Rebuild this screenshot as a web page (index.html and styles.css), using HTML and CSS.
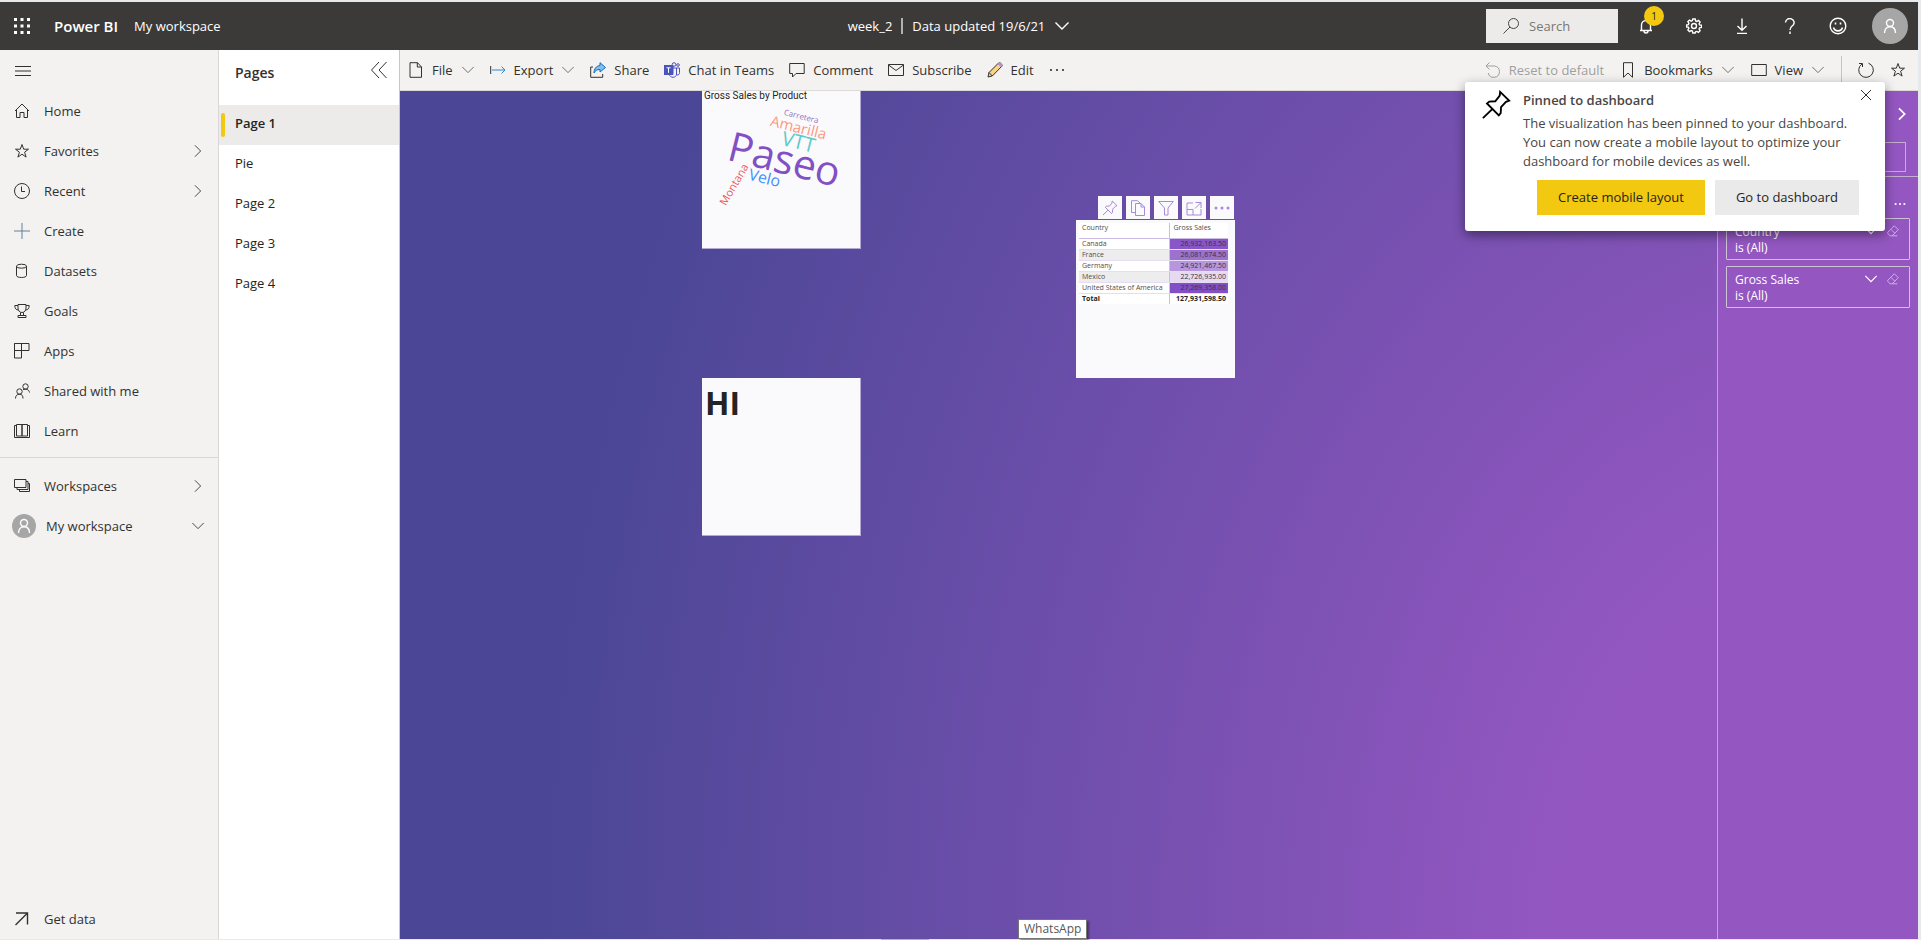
FILE: index.html
```html
<!DOCTYPE html>
<html lang="en">
<head>
<meta charset="utf-8">
<title>week_2 - Power BI</title>
<link rel="stylesheet" href="styles.css">
</head>
<body>
<svg class="defs" aria-hidden="true">
  <symbol id="chev-down" viewBox="0 0 16 16"><path d="M1.500 4.500l6.500 6.500 6.500-6.500"/></symbol>
  <symbol id="chev-right" viewBox="0 0 16 16"><path d="M4.500 1.500L11 8l-6.500 6.500"/></symbol>
  <symbol id="star" viewBox="0 0 16 16"><path d="M8 1.500l1.700 4.700h4.800l-3.900 3 1.500 4.900L8 11.200l-4.100 2.900 1.500-4.900-3.900-3h4.800z"/></symbol>
  <symbol id="person" viewBox="0 0 16 16"><circle cx="8" cy="5" r="3.500"/><path d="M2.500 15c0-4 2.300-6.300 5.500-6.300s5.500 2.300 5.500 6.300"/></symbol>
  <symbol id="pin" viewBox="0 0 16 16"><path d="M10.200 1l4.800 4.700-1.700.6-2.600 2.800-.2 3.200-1 1.200-6.300-6.300 1.200-1 3.200-.2L10 3zM6 10.200L1 15"/></symbol>
  <symbol id="eraser" viewBox="0 0 16 16"><path d="M9.500 2l4.500 4.500-7 7H4.500L2 10.500v-1zM5.500 6l4.500 4.500M7 13.500h6"/></symbol>
</svg>
<div class="app">
  <header class="topbar">
    <div class="brand">
      <button class="icon-btn" aria-label="App launcher"><svg class="i16 solid" viewBox="0 0 16 16"><path d="M0 0h3v3H0zM6.500 0h3v3h-3zM13 0h3v3h-3zM0 6.500h3v3H0zM6.500 6.500h3v3h-3zM13 6.500h3v3h-3zM0 13h3v3H0zM6.500 13h3v3h-3zM13 13h3v3h-3z"/></svg></button>
      <a class="brand-name" href="#">Power BI</a>
      <a class="crumb" href="#">My workspace</a>
    </div>
    <button class="report-title"><span>week_2</span><span class="bar"></span><span>Data updated 19/6/21</span><svg class="i16 bold"><use href="#chev-down"/></svg></button>
    <div class="top-actions">
      <label class="search"><svg class="i16" viewBox="0 0 16 16"><circle cx="10.500" cy="5.500" r="5"/><path d="M7 9L.5 15.500"/></svg><input type="text" placeholder="Search" aria-label="Search"></label>
      <button class="top-btn" aria-label="Notifications"><svg class="i16 bold" viewBox="0 0 16 16"><path d="M2 12.500h12M3.500 12.500V7a4.500 4.500 0 0 1 9 0v5.500M6 13a2 2 0 0 0 4 0"/></svg><span class="badge">1</span></button>
      <button class="top-btn" aria-label="Settings"><svg class="i16 bold" viewBox="0 0 16 16"><circle cx="8" cy="8" r="2.500"/><path d="M6.800 1h2.400l.4 1.900 1.200.5 1.700-1 1.600 1.600-1 1.700.5 1.200 1.900.3v2.300l-1.900.4-.5 1.200 1 1.600-1.600 1.700-1.700-1-1.200.4L9.200 15H6.800l-.4-2-1.200-.4-1.700 1-1.600-1.700 1-1.600-.5-1.200L.7 9V6.900l1.700-.3.500-1.200-1-1.700 1.600-1.600 1.700 1 1.100-.5z"/></svg></button>
      <button class="top-btn" aria-label="Download"><svg class="i16 bold" viewBox="0 0 16 16"><path d="M8 .5v11.500M3.500 8L8 12.200 12.500 8M3 15.500h10"/></svg></button>
      <button class="top-btn" aria-label="Help"><svg class="i16 bold" viewBox="0 0 16 16"><path d="M3.500 4.500a4.300 4 0 1 1 7.500 2.700C9.500 8.500 8 9.200 8 12M8 13.500V16"/></svg></button>
      <button class="top-btn" aria-label="Feedback"><svg class="i18 bold" viewBox="0 0 18 18"><circle cx="9" cy="9" r="7.800"/><path d="M4.500 10.500a4.700 4.700 0 0 0 9 0M6.500 5.500v2M11.500 5.500v2" stroke-width="1.600"/></svg></button>
      <button class="avatar avatar-lg" aria-label="Account"><svg class="i16 bold"><use href="#person"/></svg></button>
    </div>
  </header>

  <div class="body">
    <nav class="nav" aria-label="Main">
      <button class="menu" aria-label="Collapse navigation"><svg class="i16" viewBox="0 0 16 16"><path d="M0 3.500h16M0 8h16M0 12.500h16"/></svg></button>
      <a class="nav-item" href="#"><svg class="i16" viewBox="0 0 16 16"><path d="M1 8l7-7 7 7M2.500 6.500v8h3.500V9.500h4v5h3.500v-8"/></svg><span>Home</span></a>
      <a class="nav-item" href="#"><svg class="i16"><use href="#star"/></svg><span>Favorites</span><svg class="i14"><use href="#chev-right"/></svg></a>
      <a class="nav-item" href="#"><svg class="i16" viewBox="0 0 16 16"><circle cx="8" cy="8" r="7.500"/><path d="M7.500 3.500v5H11"/></svg><span>Recent</span><svg class="i14"><use href="#chev-right"/></svg></a>
      <a class="nav-item" href="#"><svg class="i16 plus" viewBox="0 0 16 16"><path d="M8 0v16M0 8h16"/></svg><span>Create</span></a>
      <a class="nav-item" href="#"><svg class="i16" viewBox="0 0 16 16"><ellipse cx="7.500" cy="3.200" rx="5" ry="2"/><path d="M2.500 3.200v9.300c0 1.200 2.200 2 5 2s5-.8 5-2V3.200"/></svg><span>Datasets</span></a>
      <a class="nav-item" href="#"><svg class="i16" viewBox="0 0 16 16"><path d="M4 1.500h8V5c0 2.500-1.500 4.500-4 4.500S4 7.500 4 5zM4 2.500H.8C.8 5.500 2 7 4.500 7M12 2.500h3.200c0 3-1.200 4.500-3.700 4.500M6.500 9.500v3M9.500 9.500v3M4 14.500v-2h8v2z"/></svg><span>Goals</span></a>
      <a class="nav-item" href="#"><svg class="i16" viewBox="0 0 16 16"><path d="M.5.500h14.500v7H.5zM.5.500v14.500h7V.5"/></svg><span>Apps</span></a>
      <a class="nav-item" href="#"><svg class="i16" viewBox="0 0 16 16"><circle cx="5.500" cy="8.500" r="2.700"/><circle cx="11.500" cy="3.500" r="2.700"/><path d="M1.500 15.500c0-2.700 1.500-4.300 4-4.300s3.500 1.600 3.500 4.300M9 6.800c2.500-1.500 6-.5 6.500 2.700"/></svg><span>Shared with me</span></a>
      <a class="nav-item" href="#"><svg class="i16" viewBox="0 0 16 16"><path d="M2.500 1.500H8v11.500H2.500zM8 1.500h5.500v11.500H8zM2.500 2.500H.5v12h15v-12h-2"/></svg><span>Learn</span></a>
      <div class="rule"></div>
      <a class="nav-item" href="#"><svg class="i16" viewBox="0 0 16 16"><path d="M.5 1.500h11.500v8H.5zM12 3.500h2v8H3v-2M14 5.500h1.500v8H5.500v-2"/></svg><span>Workspaces</span><svg class="i14"><use href="#chev-right"/></svg></a>
      <a class="nav-item own" href="#"><i class="avatar avatar-sm"><svg class="i16 bold"><use href="#person"/></svg></i><span>My workspace</span><svg class="i14"><use href="#chev-down"/></svg></a>
      <a class="nav-item last" href="#"><svg class="i16 bold" viewBox="0 0 16 16"><path d="M2 2h11.500v11.500M13.500 2L1.500 14"/></svg><span>Get data</span></a>
    </nav>

    <aside class="pages" aria-label="Pages">
      <div class="pages-head"><h2>Pages</h2><button class="icon-btn" aria-label="Collapse pages"><svg class="i16" viewBox="0 0 16 16"><path d="M8 0L.5 8 8 16M15.500 0L8 8l7.500 8"/></svg></button></div>
      <a class="page current" href="#">Page 1</a>
      <a class="page" href="#">Pie</a>
      <a class="page" href="#">Page 2</a>
      <a class="page" href="#">Page 3</a>
      <a class="page" href="#">Page 4</a>
    </aside>

    <main class="report">
      <div class="toolbar">
        <div class="tools">
          <button class="tool"><svg class="i16" viewBox="0 0 16 16"><path d="M2 .7h7.500L13.500 5v10.300H2zM9.300.7V5h4.200"/></svg>File<svg class="i14 chev"><use href="#chev-down"/></svg></button>
          <button class="tool"><svg class="i16" viewBox="0 0 16 16"><path d="M.7 4v8"/><path class="blue" d="M2 8h13M11.500 4.500L15 8l-3.500 3.500"/></svg>Export<svg class="i14 chev"><use href="#chev-down"/></svg></button>
          <button class="tool"><svg class="i16" viewBox="0 0 16 16"><path d="M3 5H.7v10.300h12V12"/><path class="share" d="M10 .7L15.500 5.500 10 10V7.500c-3 0-4.800 1-6 3.500 0-4 2-7 6-7.500z"/></svg>Share</button>
          <button class="tool"><svg class="i16 teams" viewBox="0 0 16 16"><circle cx="10" cy="2.500" r="1.800"/><circle cx="14" cy="3" r="1.300"/><path d="M9 6h6.500v4.500c0 2-1 2.500-2.500 2.500M12.500 6v6c0 2-1.500 3.300-3.500 3.300S6 14 5.500 13"/><path class="fill" d="M0 3.500h9v9H0z"/><path class="mark" d="M2.500 5.800h4M4.500 5.800v5"/></svg>Chat in Teams</button>
          <button class="tool"><svg class="i16" viewBox="0 0 16 16"><path d="M.7 1.500h14.500v10H7l-3.500 3.500v-3.500H.7z"/></svg>Comment</button>
          <button class="tool"><svg class="i16" viewBox="0 0 16 16"><path d="M.5 2.500h15v11H.5zM.5 3l7.500 5.500L15.500 3"/></svg>Subscribe</button>
          <button class="tool"><svg class="i16" viewBox="0 0 16 16"><path class="pencil" d="M1 15l1-4.500L11.500 1c1.800-1 4.300 1.500 3.300 3.300L5.300 14z"/><path class="tip" d="M10.500 2l1.500-1.300c1.500-.5 3.500 1.500 3 3L13.800 5.300z"/><path d="M2 10.500L5.300 14"/></svg>Edit</button>
          <button class="tool" aria-label="More options"><svg class="i16 solid" viewBox="0 0 16 16"><circle cx="2" cy="8" r="1.100"/><circle cx="8" cy="8" r="1.100"/><circle cx="14" cy="8" r="1.100"/></svg></button>
        </div>
        <div class="tools tools-end">
          <button class="tool" disabled><svg class="i16" viewBox="0 0 16 16"><path d="M1 4h8.500a5.700 5.700 0 1 1-6.300 7M4.500.5L1 4l3.500 3.500"/></svg>Reset to default</button>
          <button class="tool"><svg class="i16" viewBox="0 0 16 16"><path d="M3.500.7h9v14.600L8 11l-4.500 4.300z"/></svg>Bookmarks<svg class="i14 chev"><use href="#chev-down"/></svg></button>
          <button class="tool"><svg class="i16" viewBox="0 0 16 16"><path d="M.7 2.500h14.600v11H.7z"/></svg>View<svg class="i14 chev"><use href="#chev-down"/></svg></button>
          <span class="split"></span>
          <button class="tool" aria-label="Refresh"><svg class="i16" viewBox="0 0 16 16"><path d="M10.500 1.200A7.300 7.300 0 1 1 4 2M1 1.500h3.500V5"/></svg></button>
          <button class="tool" aria-label="Favorite"><svg class="i16"><use href="#star"/></svg></button>
        </div>
      </div>

      <div class="stage">
        <div class="canvas">
          <section class="visual cloud">
            <h3>Gross Sales by Product</h3>
            <svg viewBox="0 0 159 158" role="img" aria-label="Word cloud">
              <text transform="translate(24 69) rotate(14)" font-size="41" fill="#8250c4">Paseo</text>
              <text transform="translate(82 24) rotate(14)" font-size="8" fill="#9071ba">Carretera</text>
              <text transform="translate(68 35) rotate(14)" font-size="15" fill="#ff977e">Amarilla</text>
              <text transform="translate(79 54) rotate(14)" font-size="20" fill="#5ecbc8">VTT</text>
              <text transform="translate(46 89) rotate(14)" font-size="16" fill="#438fff">Velo</text>
              <text transform="translate(24 116) rotate(-60)" font-size="11" fill="#eb5757">Montana</text>
            </svg>
          </section>
          <section class="visual note"><p>HI</p></section>
          <div class="visual-tools">
            <button aria-label="Pin visual"><svg class="i16"><use href="#pin"/></svg></button>
            <button aria-label="Copy visual"><svg class="i16" viewBox="0 0 16 16"><path d="M5 12.500H1.500V.7h6L10 3M5.500 3.500h5.500l3.500 3.500v8.500h-9zM11 3.500V7h3.500"/></svg></button>
            <button aria-label="Filters"><svg class="i16" viewBox="0 0 16 16"><path d="M.7 1.500h14.600L10 8v7H6.500V8z"/></svg></button>
            <button aria-label="Focus mode"><svg class="i16" viewBox="0 0 16 16"><path d="M7 3H1v12h14V9M1 9.500h6V15M9.500 2.500H15V8M15 2.500L9 8.500"/></svg></button>
            <button aria-label="More options"><svg class="i16 solid" viewBox="0 0 16 16"><circle cx="2" cy="8" r="1.500"/><circle cx="8" cy="8" r="1.500"/><circle cx="14" cy="8" r="1.500"/></svg></button>
          </div>
          <section class="visual sales">
            <table>
              <thead><tr><th scope="col">Country</th><th scope="col">Gross Sales</th></tr></thead>
              <tbody>
                <tr><td>Canada</td><td class="s4">26,932,163.50</td></tr>
                <tr><td>France</td><td class="s3">26,081,674.50</td></tr>
                <tr><td>Germany</td><td class="s2">24,921,467.50</td></tr>
                <tr><td>Mexico</td><td class="s1">22,726,935.00</td></tr>
                <tr><td>United States of America</td><td class="s5">27,269,358.00</td></tr>
              </tbody>
              <tfoot><tr><td>Total</td><td>127,931,598.50</td></tr></tfoot>
            </table>
          </section>
        </div>
        <aside class="filters" aria-label="Filters">
          <div class="filters-head"><button class="icon-btn" aria-label="Collapse filters"><svg class="i14 thick"><use href="#chev-right"/></svg></button></div>
          <input class="filter-search" type="text" aria-label="Search filters">
          <div class="filters-more"><button class="icon-btn" aria-label="More options"><svg class="i14 solid" viewBox="0 0 16 16"><circle cx="3" cy="8" r="1.200"/><circle cx="8" cy="8" r="1.200"/><circle cx="13" cy="8" r="1.200"/></svg></button></div>
          <div class="filter"><div><b>Country</b><span>is (All)</span></div><svg class="i14 bold"><use href="#chev-down"/></svg><svg class="i14 dim"><use href="#eraser"/></svg></div>
          <div class="filter"><div><b>Gross Sales</b><span>is (All)</span></div><svg class="i14 bold"><use href="#chev-down"/></svg><svg class="i14 dim"><use href="#eraser"/></svg></div>
        </aside>
      </div>
    </main>
  </div>

  <div class="toast" role="status">
    <svg class="toast-pin"><use href="#pin"/></svg>
    <div class="toast-text">
      <h4>Pinned to dashboard</h4>
      <p>The visualization has been pinned to your dashboard. You can now create a mobile layout to optimize your dashboard for mobile devices as well.</p>
      <div class="toast-actions"><button class="primary">Create mobile layout</button><button>Go to dashboard</button></div>
    </div>
    <button class="toast-close" aria-label="Close"><svg class="i12" viewBox="0 0 12 12"><path d="M1 1l10 10M11 1L1 11"/></svg></button>
  </div>
  <div class="tooltip" role="tooltip">WhatsApp</div>
  <div class="taskbar-mark"></div>
</div>
</body>
</html>
```
FILE: styles.css
```css
* { box-sizing: border-box; }
body {
  margin: 0;
  font-family: "Open Sans", "Noto Sans", sans-serif;
  font-size: 13px;
  line-height: 20px;
  color: #323130;
}
h2, h3, h4, p { margin: 0; }
a { color: inherit; text-decoration: none; }
button, input { font: inherit; color: inherit; }
button { padding: 0; border: 0; background: none; }
svg { fill: none; stroke: currentColor; flex: none; }
.defs { position: absolute; width: 0; height: 0; }
.solid { fill: currentColor; stroke: none; }
.i12 { width: 12px; height: 12px; }
.i14 { width: 14px; height: 14px; }
.i16 { width: 16px; height: 16px; }
.i18 { width: 18px; height: 18px; }
.bold { stroke-width: 1.4; }
.thick { stroke-width: 2; }
.blue { stroke: #2b88d8; }
.plus { stroke: #5f8296; }
.icon-btn { display: flex; }

.app {
  position: relative;
  display: flex;
  flex-direction: column;
  height: 100vh;
  padding: 2px 3px 1px 0;
  background: #e6eaec;
  overflow: hidden;
}

/* Top bar */
.topbar {
  display: grid;
  grid-template-columns: 1fr auto 1fr;
  align-items: center;
  height: 48px;
  background: #3b3a39;
  color: #fff;
}
.brand { display: flex; align-items: center; padding-left: 14px; }
.brand-name { margin-left: 24px; font-size: 15px; font-weight: 600; }
.crumb { margin-left: 16px; }
.report-title { display: flex; align-items: center; gap: 9px; }
.bar { width: 2px; height: 16px; background: #b3b0ad; }
.top-actions { display: flex; align-items: center; justify-content: flex-end; padding-right: 10px; }
.search {
  display: flex;
  align-items: center;
  gap: 10px;
  width: 132px;
  height: 34px;
  margin-right: 4px;
  padding-left: 17px;
  background: #edebe9;
  color: #484644;
}
.search input { width: 80px; padding: 0; border: 0; background: none; }
.search input::placeholder { color: #797775; opacity: 1; }
.top-btn { position: relative; display: grid; place-items: center; width: 48px; height: 48px; }
.badge {
  position: absolute;
  top: 4px;
  left: 22px;
  width: 20px;
  height: 20px;
  border-radius: 50%;
  background: #f2c811;
  color: #252423;
  font-size: 10px;
}
.avatar { display: grid; place-items: center; border-radius: 50%; background: #a6a6a6; color: #fff; }
.avatar-lg { width: 36px; height: 36px; margin-left: 10px; }
.avatar-sm { width: 24px; height: 24px; }

/* Navigation */
.body { display: flex; flex: 1; min-height: 0; }
.nav {
  display: flex;
  flex-direction: column;
  width: 219px;
  background: #f3f2f1;
  border-right: 1px solid #d9d8d6;
}
.menu { display: flex; align-items: center; height: 41px; padding-left: 15px; }
.nav-item { display: flex; align-items: center; gap: 14px; height: 40px; padding: 0 13px 0 14px; }
.nav-item span { flex: 1; }
.own { gap: 10px; padding-left: 12px; }
.rule { margin: 6px 0 8px; border-top: 1px solid #d9d8d6; }
.last { margin-top: auto; }

/* Pages pane */
.pages { width: 181px; background: #fff; border-right: 1px solid #c8c6c4; }
.pages-head { display: flex; justify-content: space-between; height: 55px; padding: 12px 12px 0 16px; }
.pages-head h2 { font-size: 14px; font-weight: 600; line-height: 22px; }
.page { display: flex; align-items: center; height: 40px; padding: 0 0 4px 16px; color: #252423; }
.current { gap: 10px; padding-left: 2px; background: #edebe9; font-weight: 600; }
.current::before { width: 4px; height: 24px; margin-top: 4px; border-radius: 2px; background: #f2c811; content: ""; }

/* Report toolbar */
.report { display: flex; flex: 1; flex-direction: column; min-width: 0; }
.toolbar {
  display: flex;
  align-items: center;
  justify-content: space-between;
  height: 41px;
  padding: 0 12px 0 8px;
  background: #f3f2f1;
  border-bottom: 1px solid #dcdad8;
  white-space: nowrap;
}
.tools { display: flex; align-items: center; gap: 15px; }
.tools-end { gap: 16px; }
.tool { display: flex; align-items: center; gap: 8px; }
.tool:disabled { color: #a19f9d; }
.chev { color: #605e5c; }
.split { width: 1px; height: 28px; background: #c8c6c4; }
.share { fill: #83beec; stroke: #106ebe; }
.teams { stroke: #4b53bc; }
.fill { fill: #4b53bc; }
.mark { stroke: #fff; }
.pencil { fill: #f5d58a; }
.tip { fill: #c08fd0; stroke: none; }

/* Report canvas */
.stage { display: flex; flex: 1; min-height: 0; background: #9457c2; }
.canvas {
  position: relative;
  flex: 1;
  background: radial-gradient(ellipse 99% 206% at 110% 100%, #9457c2 22%, #4b4796 100%);
}
.visual {
  position: absolute;
  width: 159px;
  height: 158px;
  background: #fafafd;
  border: solid #b3a9d4;
  border-width: 0 1px 1px 0;
}
.cloud { top: 0; left: 302px; }
.cloud h3 {
  position: absolute;
  padding-left: 2px;
  font: 10px/10px Roboto, sans-serif;
  color: #252423;
}
.cloud svg { display: block; width: 100%; stroke: none; }
.note { top: 287px; left: 302px; padding: 4px 3px; }
.note p { font-size: 32px; font-weight: 700; line-height: 42px; color: #252423; }
.sales { top: 129px; left: 676px; padding: 3px; border-color: #fafafd; }
.visual-tools { position: absolute; top: 105px; left: 698px; display: flex; gap: 4px; }
.visual-tools button {
  display: grid;
  place-items: center;
  width: 24px;
  height: 23px;
  background: #fafafd;
  color: #a98ad8;
}
table { width: 149px; border-collapse: collapse; font-size: 7px; line-height: 10px; color: #504e4c; }
th, td { height: 11px; padding: 0 3px; white-space: nowrap; }
th { height: 15px; background: #fff; border-bottom: 1px solid #cdbbe8; font-weight: 400; text-align: left; vertical-align: top; }
td { border-bottom: 1px solid #e6dcf3; background: #fff; }
th + th, td + td { border-left: 1px solid #cdbbe8; }
td + td { padding-right: 2px; text-align: right; }
tr:nth-child(even) td { background: #ededed; }
tbody tr td.s1 { background: #e6daf3; }
tbody tr td.s2 { background: #b696dc; }
tbody tr td.s3 { background: #9b72d0; }
tbody tr td.s4 { background: #8856c7; }
tbody tr td.s5 { background: #8250c4; }
td[class] { color: #38303f; }
tfoot td { border-bottom: 0; color: #252423; font-weight: 700; }

/* Filters pane */
.filters {
  display: flex;
  flex-direction: column;
  width: 201px;
  border-left: 1px solid #b9a8c8;
  color: #fff;
  font-size: 12px;
  line-height: 16px;
}
.filters-head { display: flex; justify-content: flex-end; height: 51px; padding: 16px 9px 0; }
.filter-search { height: 30px; margin: 0 12px 4px 8px; border: 1px solid #c3b0cf; background: none; }
.filters-more { display: flex; justify-content: flex-end; height: 42px; padding: 20px 11px 0; border-top: 1px solid #c3b0cf; }
.filter {
  display: flex;
  gap: 8px;
  margin: 0 8px 6px;
  padding: 5px 9px 3px 8px;
  border: 1px solid #cfc3d4;
  border-radius: 1px;
}
.filter div { flex: 1; }
.filter b { display: block; font-weight: 400; }
.dim { opacity: .6; }

/* Overlays */
.toast {
  position: absolute;
  top: 82px;
  right: 36px;
  display: flex;
  width: 420px;
  padding: 8px 26px 16px 16px;
  background: #fff;
  border-radius: 3px;
  box-shadow: 0 4px 12px rgba(0, 0, 0, .45);
}
.toast-pin { width: 30px; height: 30px; color: #000; }
.toast-text { flex: 1; padding-left: 12px; color: #484644; }
.toast-text h4 { font-size: 13px; font-weight: 600; line-height: 20px; }
.toast-text p { padding-top: 4px; line-height: 19px; }
.toast-actions { display: flex; justify-content: flex-end; gap: 10px; padding-top: 9px; }
.toast-actions button { padding: 0 21px; background: #eaeaea; color: #252423; line-height: 35px; }
.toast-actions .primary { background: #f2c811; }
.toast-close { position: absolute; top: 7px; right: 13px; display: flex; }
.tooltip {
  position: absolute;
  bottom: 1px;
  left: 1018px;
  padding: 0 5px;
  background: #fff;
  border: 1px solid #767676;
  box-shadow: 2px 2px 2px rgba(0, 0, 0, .4);
  color: #575757;
  font-size: 12px;
  line-height: 18px;
}
.taskbar-mark { position: absolute; bottom: 0; left: 881px; width: 48px; height: 1px; background: #f0a080; }
```
